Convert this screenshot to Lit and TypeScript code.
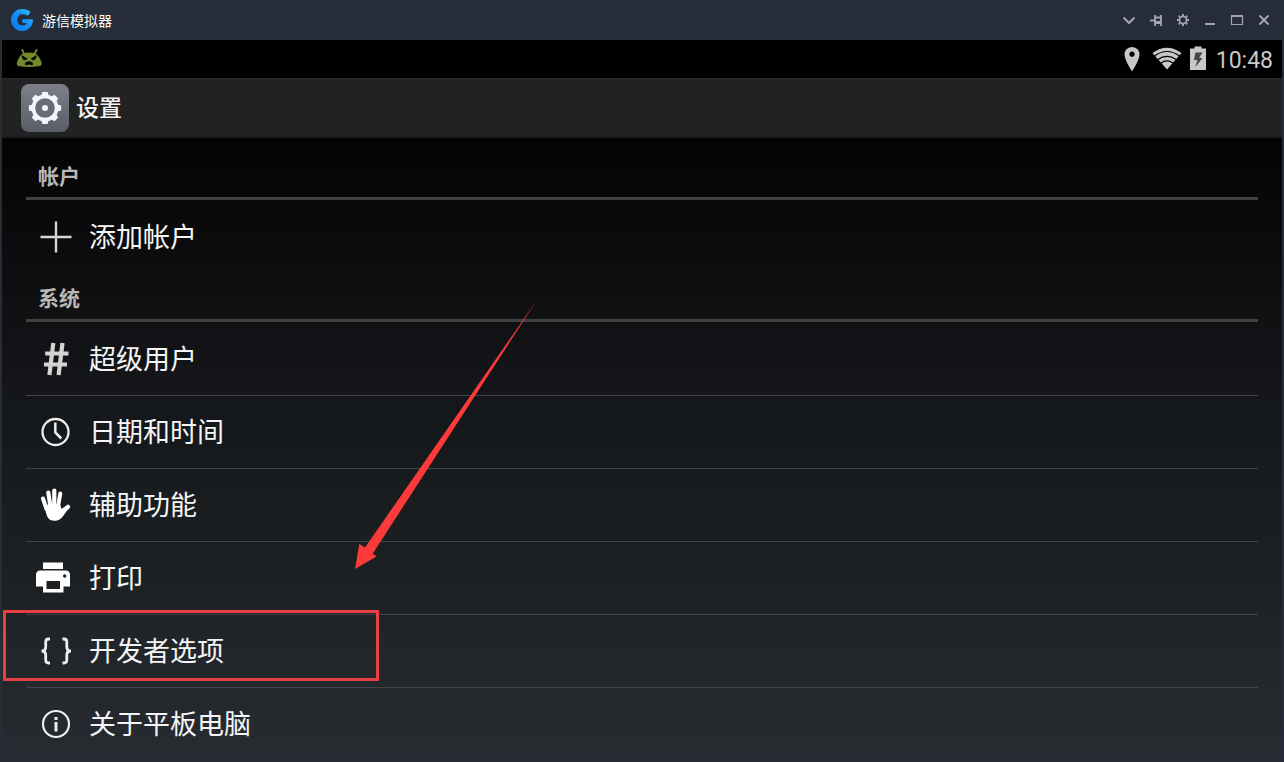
import { LitElement, html, svg, css, nothing } from "lit";
import { customElement, property } from "lit/decorators.js";

// Toothed ring outline centred on (cx, cy).
function gearPath(cx: number, cy: number, teeth: number, outer: number, inner: number, top: number, base: number): string {
  const points: string[] = [];
  for (let i = 0; i < teeth; i++) {
    const a = (i / teeth) * Math.PI * 2 - Math.PI / 2;
    for (const [r, d] of [[inner, -base], [outer, -top], [outer, top], [inner, base]]) {
      points.push(`${(cx + r * Math.cos(a + d)).toFixed(2)} ${(cy + r * Math.sin(a + d)).toFixed(2)}`);
    }
  }
  return `M${points.join("L")}Z`;
}

const icons: Record<string, unknown> = {
  plus: svg`<path d="M20 5.500v31M4.500 21h31" stroke="#d6d6d4" stroke-width="2.400" fill="none"/>`,
  hash: svg`<path d="M17.300 5 13.400 37M26.500 5 22.600 37M9.200 15.500H32.500M8 26.500H31" stroke="#d4d4d4" stroke-width="4.200" fill="none"/>`,
  clock: svg`<circle cx="19.500" cy="21" r="13" fill="none" stroke="#eee" stroke-width="2.300"/><path d="M19.300 11.500v10l6 6" fill="none" stroke="#eee" stroke-width="2.500"/>`,
  hand: svg`<g fill="none" stroke="#fff" stroke-linecap="round"><path d="M7 14.500 10.500 25" stroke-width="4"/><path d="M12.300 8.500 14.500 23" stroke-width="4.200"/><path d="M18.300 6.500V23" stroke-width="4.200"/><path d="M24.300 9.500 22 23" stroke-width="4"/><path d="M32 22.800 24 29.500" stroke-width="4.200"/></g><path d="M8.700 21.500C14 19 20 19 24.500 21.500L25.500 25 30.800 21.500 33 24.700C29 28 27.500 33 23.500 35.500 19.500 38 13.500 37 11.500 33 9.800 29.500 9.500 25.500 8.700 21.500Z" fill="#fff"/>`,
  printer: svg`<path d="M7 5.500H27v6.500H7z" fill="#fff"/><path d="M4.500 13.500H29.500Q34 13.500 34 18V29.500H27.500V35.500H7V29.500H0V18Q0 13.500 4.500 13.500Z" fill="#fff"/><path d="M10.500 24H24v8H10.500z" fill="#1f2225"/><circle cx="28.700" cy="19" r="1.700" fill="#1f2225"/>`,
  braces: svg`<path d="M14 9H12.500Q9.700 9 9.700 12V17Q9.700 21 5.500 21Q9.700 21 9.700 25V30Q9.700 33 12.500 33H14M26.500 9H28Q30.800 9 30.800 12V17Q30.800 21 35 21Q30.800 21 30.800 25V30Q30.800 33 28 33H26.500" fill="none" stroke="#eee" stroke-width="2.800"/>`,
  info: svg`<circle cx="20" cy="21" r="13" fill="none" stroke="#eee" stroke-width="2.200"/><path d="M18.500 14h3v3h-3zM18.500 19h3v9.500h-3z" fill="#eee"/>`,
};

interface Entry { icon: string; label: string; marked?: boolean }

const sections: { title: string; entries: Entry[] }[] = [
  { title: "帐户", entries: [{ icon: "plus", label: "添加帐户" }] },
  {
    title: "系统",
    entries: [
      { icon: "hash", label: "超级用户" },
      { icon: "clock", label: "日期和时间" },
      { icon: "hand", label: "辅助功能" },
      { icon: "printer", label: "打印" },
      { icon: "braces", label: "开发者选项", marked: true },
      { icon: "info", label: "关于平板电脑" },
    ],
  },
];

@customElement("setting-row")
class SettingRow extends LitElement {
  @property() icon = "";
  @property() label = "";
  @property({ type: Boolean }) first = false;
  @property({ type: Boolean }) marked = false;

  static styles = css`
    :host { display: block; position: relative; }
    .row {
      box-sizing: border-box; width: 100%; height: 73px; padding: 0 10px;
      display: flex; align-items: center; gap: 13px;
      border: 0; border-top: 1px solid #404446; background: none;
      color: #f4f5f6; font: 400 27px/40px "Noto Sans CJK SC", sans-serif; text-align: left;
    }
    .row.first { border-top-color: transparent; }
    .label { padding-bottom: 2px; }
    .icon { width: 40px; height: 42px; flex: none; }
    .mark {
      position: absolute; left: -23px; top: -4px; width: 376px; height: 71px;
      box-sizing: border-box; border: 3px solid #e94043; pointer-events: none;
    }
  `;

  render() {
    return html`
      <button class="row ${this.first ? "first" : ""}">
        <svg class="icon" viewBox="0 0 40 42" aria-hidden="true">${icons[this.icon]}</svg>
        <span class="label">${this.label}</span>
      </button>
      ${this.marked ? html`<div class="mark"></div>` : nothing}
    `;
  }
}

@customElement("app-root")
class AppRoot extends LitElement {
  static styles = css`
    :host {
      display: flex; flex-direction: column; min-height: 100vh; box-sizing: border-box;
      background: #272c38; font-family: "Noto Sans CJK SC", sans-serif; color: #fff;
    }
    .titlebar {
      height: 40px; padding: 0 10px; display: flex; align-items: center; gap: 8px;
      background: linear-gradient(#272c39, #262d38 60%, #242f38);
    }
    .logo { width: 24px; height: 24px; }
    .name { flex: 1; font-size: 14px; line-height: 20px; }
    .controls { display: flex; gap: 7px; }
    .control { width: 20px; height: 20px; padding: 0; border: 0; background: none; display: block; }
    .control svg { display: block; width: 20px; height: 20px; fill: none; stroke: #a2a6b2; stroke-width: 2; }
    .screen { flex: 1; display: flex; flex-direction: column; margin: 0 2px; }
    .status {
      height: 38px; padding: 0 9px 0 14px; display: flex; align-items: center;
      background: #000; color: #c8c8c8;
    }
    .droid { width: 26px; height: 20px; margin-right: auto; }
    .signals { display: flex; align-items: center; gap: 8px; }
    .pin { width: 16px; height: 26px; margin-right: 4px; }
    .wifi { width: 30px; height: 26px; }
    .battery { width: 16px; height: 26px; margin-right: 2px; }
    .time { padding-top: 3px; font: 23px/28px Roboto, sans-serif; }
    .actionbar {
      height: 60px; box-sizing: border-box; padding: 0 19px; display: flex; align-items: center; gap: 7px;
      background: #222; border-top: 1px solid #2b2b2b; border-bottom: 2px solid #1b1b1b;
    }
    .gear { width: 48px; height: 48px; }
    .heading { margin: 0; padding-bottom: 4px; font-size: 23px; line-height: 36px; font-weight: 500; color: #f2f2f2; }
    .list {
      flex: 1; position: relative; padding: 13px 24px 0;
      background: linear-gradient(#040404, #0d0d0f 20%, #131417 36%, #171b1e 52%, #1e2124 72%, #24272c 88%, #272c32);
    }
    .section {
      margin: 0; height: 49px; box-sizing: border-box; padding: 7px 12px 0;
      border-bottom: 3px solid #414143; font-size: 21px; line-height: 34px; font-weight: 700; color: #b8b8b8;
    }
    .entries { margin: 0; padding: 0; list-style: none; }
    .arrow { position: absolute; left: 353px; top: 163px; width: 184px; height: 272px; pointer-events: none; overflow: visible; }
  `;

  private control(label: string, shape: unknown) {
    return html`<button class="control" aria-label=${label}><svg viewBox="0 0 20 20">${shape}</svg></button>`;
  }

  render() {
    return html`
      <header class="titlebar">
        <svg class="logo" viewBox="0 0 24 24" aria-hidden="true">
          <defs><linearGradient id="g" x1="0" y1="1" x2="1" y2="0"><stop offset="0" stop-color="#0878f4"/><stop offset="0.500" stop-color="#168dfa"/><stop offset="1" stop-color="#2fc3fa"/></linearGradient></defs>
          <path d="M20.500 4 18 7.800Q15.500 5.800 12.500 6.200 7.500 7 7.200 12 7.500 17 12 17.500 15.500 17.500 17 15H12.500L12 11.200H23Q23 16.500 19.800 19.800 16.500 23 12 23 7 22.900 4 19.600 1 16.300 1 12 1 7.500 4.200 4.300 7.500 1 12 1 17.500 1 20.500 4Z" fill="url(#g)"/>
          <circle cx="10.500" cy="7" r="1.300" fill="#10407a"/>
        </svg>
        <span class="name">游信模拟器</span>
        <div class="controls">
          ${this.control("菜单", svg`<path d="m4.500 7.500 5.500 5.500 5.500-5.500"/>`)}
          ${this.control("置顶", svg`<path d="M4 10.500H9M9 5V16M9 7.500H15M15 5V16" stroke-width="1.800"/><path d="M9 12.500H15" stroke-width="3"/>`)}
          ${this.control("设置", svg`<circle cx="10" cy="10" r="3.500" stroke-width="1.700"/><path d="M10 4v2M10 14v2M4 10h2M14 10h2M5.800 5.800l1.400 1.400M12.800 12.800l1.400 1.400M5.800 14.200l1.400-1.400M12.800 7.200l1.400-1.400"/>`)}
          ${this.control("最小化", svg`<path d="M5 14H15"/>`)}
          ${this.control("最大化", svg`<path d="M4.500 6H15.500V14.500H4.500Z" stroke-width="1.200"/><path d="M4 6H16"/>`)}
          ${this.control("关闭", svg`<path d="M5.500 5.500 14.500 14.500M14.500 5.500 5.500 14.500"/>`)}
        </div>
      </header>
      <div class="screen">
        <div class="status">
          <svg class="droid" viewBox="0 0 26 20" aria-hidden="true">
            <path d="M6 0 8.500 6M21 0 18 6" stroke="#73892c" stroke-width="1.800"/>
            <path d="M7 4.300Q13 2.500 19 4.300 24 7.500 25.700 14 26 16.800 22.500 17.300 13 18.500 3.500 17.300 0.200 16.800 0.800 14 2.500 7.500 7 4.300Z" fill="#73892c"/>
            <path d="M5.500 6 11.500 9.500Q10.500 11.500 8 11.200 6 10.500 5.500 6ZM20.800 6 14.800 9.500Q15.500 11.500 18 11.200 20.300 10.500 20.800 6ZM8.800 15.500Q9.200 12.200 13 12.200 16.800 12.200 17.200 15.500L15.500 16.300 13 15.500 10.500 16.300Z" fill="#080a02"/>
          </svg>
          <div class="signals">
            <svg class="pin" viewBox="0 0 16 26" aria-hidden="true"><path d="M8 1Q15.500 1.500 15.500 9 15 14.500 8 25.500 1 14.500 0.500 9 0.500 1.500 8 1ZM8 5.500a2.700 2.700 0 1 0 .01 0Z" fill="#c8c8c8" fill-rule="evenodd"/></svg>
            <svg class="wifi" viewBox="0 0 30 26" aria-hidden="true">
              <path d="M0.500 7Q15-3.500 29.500 7L15 23.500Z" fill="#c8c8c8"/>
              <path d="M2.500 10Q15 1 27.500 10M5.500 13.700Q15 7 24.500 13.700M8.800 17.200Q15 12.500 21.200 17.200" fill="none" stroke="#000" stroke-width="1.200"/>
            </svg>
            <svg class="battery" viewBox="0 0 16 26" aria-hidden="true"><path d="M4.500 0.500h7v2H16V24H0V2.500h4.500Z" fill="#c8c8c8"/><path d="M10 6.500H5.500L4 14H7.500L5.300 21 12.500 12H9L12.500 6.500Z" fill="#444"/></svg>
            <time class="time">10:48</time>
          </div>
        </div>
        <header class="actionbar">
          <svg class="gear" viewBox="0 0 48 48" aria-hidden="true">
            <defs><linearGradient id="k" x2="0" y2="1"><stop stop-color="#7d808a"/><stop offset="1" stop-color="#595d68"/></linearGradient></defs>
            <rect width="48" height="48" rx="8" fill="url(#k)"/>
            <path d=${gearPath(24, 24, 8, 16.3, 13.6, 0.16, 0.25)} fill="#f4f5fa"/>
            <circle cx="24" cy="24" r="9.800" fill="#696c77"/><circle cx="24" cy="24" r="3" fill="#f4f5fa"/>
          </svg>
          <h1 class="heading">设置</h1>
        </header>
        <main class="list">
          ${sections.map((section) => html`
            <h2 class="section">${section.title}</h2>
            <ul class="entries">
              ${section.entries.map((entry, i) => html`
                <li><setting-row .icon=${entry.icon} .label=${entry.label} .first=${i === 0} .marked=${!!entry.marked}></setting-row></li>`)}
            </ul>`)}
          <svg class="arrow" viewBox="0 0 184 272" aria-hidden="true"><path d="M0 268 4.300 243 10 246.500 182-1 17.800 252.500 21.500 255.500Z" fill="#fd3a3a"/></svg>
        </main>
      </div>
    `;
  }
}
